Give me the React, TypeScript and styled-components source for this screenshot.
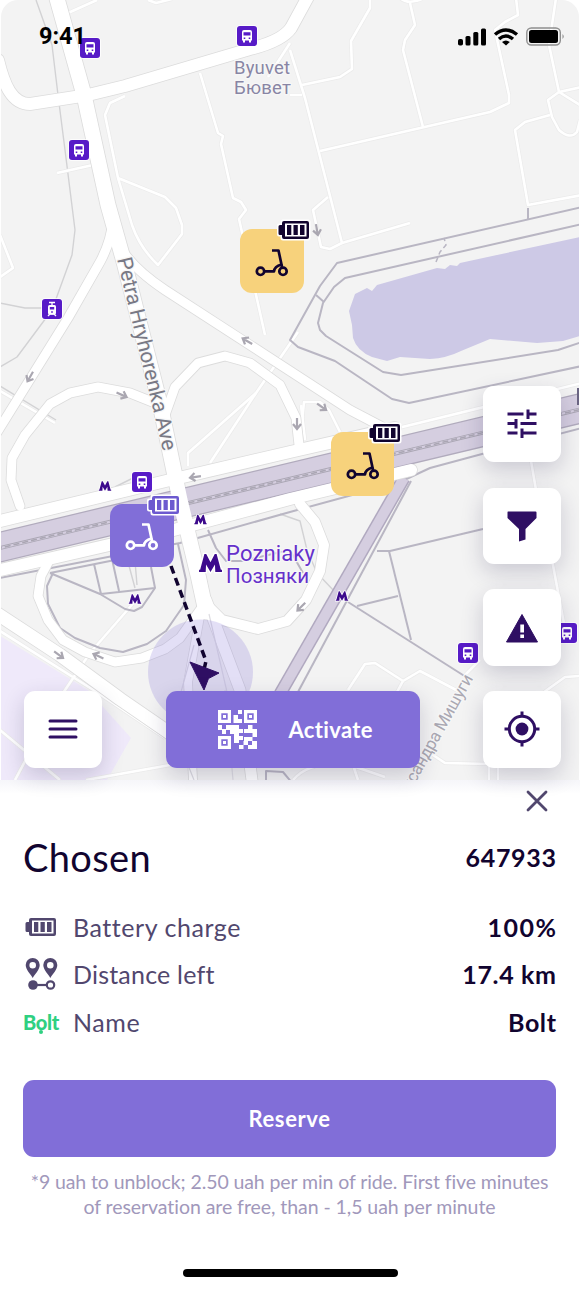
import React from 'react';
import styled, { createGlobalStyle } from 'styled-components';

const GlobalStyle = createGlobalStyle`
  * { box-sizing: border-box; }
  body { margin: 0; background: #fff; }
  button { font: inherit; border: 0; padding: 0; }
`;

const ink = '#2f0f63';
const violet = '#816ed8';
const slate = '#51476e';
const night = '#11042f';

const Screen = styled.main`
  width: 580px;
  height: 1291px;
  display: flex;
  flex-direction: column;
  background: #fff;
  overflow: hidden;
  font-family: Lato, 'Open Sans', sans-serif;
`;

const MapArea = styled.section`
  position: relative;
  flex: 0 0 780px;
  margin: 0 1px;
  display: flex;
  flex-direction: column;
  justify-content: space-between;
`;

const MapCanvas = styled.svg`
  position: absolute;
  inset: 0;
  width: 578px;
  height: 780px;
  border-radius: 17px 17px 0 0;
`;

const StatusBar = styled.header`
  position: relative;
  display: flex;
  justify-content: space-between;
  align-items: flex-start;
  padding: 23px 14px 0 38px;
`;

const Clock = styled.span`
  font: 700 23.5px/27px Roboto, sans-serif;
  color: #000;
`;

const StatusIcons = styled.svg`
  display: block;
  width: 108px;
  height: 20px;
  margin-top: 4px;
`;

const Controls = styled.div`
  position: relative;
  display: flex;
  align-items: flex-end;
  padding: 0 18px 12.5px 23px;
`;

const Fab = styled.button`
  display: flex;
  align-items: center;
  justify-content: center;
  width: 78px;
  height: 76.5px;
  border-radius: 11px;
  background: #fff;
  box-shadow: 0 8px 22px rgba(40, 35, 80, 0.2);
`;

const FabColumn = styled.div`
  display: flex;
  flex-direction: column;
  gap: 25.2px;
  margin-left: auto;
`;

const ActivateButton = styled.button`
  display: flex;
  align-items: center;
  gap: 32px;
  width: 254px;
  height: 76.5px;
  margin-left: 63.5px;
  padding-left: 52px;
  border-radius: 11px;
  background: ${violet};
  color: #fff;
  font-size: 22px;
  font-weight: 700;
  letter-spacing: 0.35px;
  box-shadow: 0 8px 22px rgba(40, 35, 80, 0.2);
`;

const Pin = styled.div<{ $x: number; $y: number; $active?: boolean }>`
  position: absolute;
  left: ${p => p.$x}px;
  top: ${p => p.$y}px;
  width: 63.5px;
  height: 63.5px;
  border-radius: 12px;
  background: ${p => (p.$active ? violet : '#f7d27c')};
  color: ${p => (p.$active ? '#fff' : night)};
`;

const PinScooter = styled.svg`
  position: absolute;
  left: 15px;
  top: 17.5px;
  width: 34px;
  height: 30px;
`;

const PinBattery = styled.svg`
  position: absolute;
  left: 36px;
  top: -10px;
  width: 36px;
  height: 24px;
`;

const Sheet = styled.section`
  flex: 1;
  display: flex;
  flex-direction: column;
  padding: 0 24px 0 23px;
  background: linear-gradient(#f6f6fa, #fff 14px);
`;

const CloseButton = styled.button`
  align-self: flex-end;
  width: 22px;
  height: 22px;
  margin: 10px 8px 0 0;
  background: none;
  svg { display: block; }
`;

const TitleRow = styled.div`
  display: flex;
  justify-content: space-between;
  align-items: center;
  height: 50px;
  margin-top: 20px;
`;

const Title = styled.h1`
  margin: 0;
  font-size: 38px;
  font-weight: 400;
  letter-spacing: 0.35px;
  color: ${night};
`;

const Value = styled.span<{ $spacing?: number }>`
  font-size: 25px;
  font-weight: 700;
  color: ${night};
  white-space: nowrap;
  letter-spacing: ${p => p.$spacing ?? 0}px;
  margin-right: ${p => -(p.$spacing ?? 0)}px;
`;

const Details = styled.dl`
  margin: 21px 0 0;
`;

const DetailRow = styled.div`
  display: flex;
  align-items: center;
  height: 47.5px;
  font-size: 25px;
  dt { flex: 1; color: ${slate}; }
  dd { margin: 0; }
`;

const DetailIcon = styled.span`
  width: 50px;
  height: 40px;
  display: flex;
  align-items: center;
  svg { display: block; }
`;

const Term = styled.span<{ $spacing: number }>`
  letter-spacing: ${p => p.$spacing}px;
`;

const BoltMark = styled.span`
  position: relative;
  color: #2fd081;
  font: 900 20px/24px Lato, sans-serif;
  letter-spacing: -0.3px;
`;

const BoltDot = styled.i`
  position: absolute;
  left: 16px;
  top: 20.5px;
  width: 4px;
  height: 4px;
  border-radius: 50%;
  background: #2fd081;
`;

const ReserveButton = styled.button`
  height: 76.5px;
  margin-top: 34.5px;
  border-radius: 11px;
  background: ${violet};
  color: #fff;
  font-size: 22px;
  font-weight: 700;
  letter-spacing: 0.6px;
`;

const Footnote = styled.p`
  margin: 12px 0 0;
  text-align: center;
  font-size: 19.5px;
  line-height: 25.5px;
  color: #a198bb;
  white-space: nowrap;
`;

const FootLine = styled.span<{ $spacing: number }>`
  display: block;
  letter-spacing: ${p => p.$spacing}px;
`;

const HomeIndicator = styled.div`
  width: 215px;
  height: 8px;
  margin: auto 158px 14px 160px;
  border-radius: 4px;
  background: #000;
`;

type Road = { d: string; w: number };

const mainRoads: Road[] = [
  { d: 'M-2 60C4 85 12 104 30 104L88 95L125 86L250 49Q282 41 291 28L309-5', w: 12 },
  { d: 'M56-5L84 95L108 205L124 262L160 404L180 500L198 575L206 612', w: 15 },
  { d: 'M113 220Q111 242 100 262L68 318L-4 434', w: 9 },
  { d: 'M122 250Q135 270 165 290L290 371L350 410L392 432', w: 9 },
  { d: 'M165 407L130 393L98 387L70 393L50 404L25 435L12 458L11 480L20 506', w: 9 },
  { d: 'M165 415L175 387L198 363L225 356L250 363L280 385L296 418L299 445', w: 9 },
  { d: 'M-4 522L170 480L290 452L395 428', w: 12 },
  { d: 'M-4 571L170 531L290 499L411 470', w: 12 },
  { d: 'M49 561L41 576L38 596L48 620L63 640L85 652L115 662L142 658L165 649L180 638L200 610', w: 9 },
  { d: 'M202 600L222 620L258 629L287 621L306 600L320 571L324 545L315 522L300 504', w: 10 },
  { d: 'M-4 613L60 655L120 699L200 754', w: 13 },
  { d: 'M203 600L188 682L193 780', w: 8 },
  { d: 'M206 600L240 690L252 780', w: 11 },
];

const lanes = [
  'M68 13L97 0', 'M148 0L156 3L172-1',
  'M200 73L218 133L223 136L221 144L233 198L241 202L246 210L239 219L265 335',
  'M125 96L110 103L105 115L118 178L132 225Q140 248 158 265L182 234V225L176 208L165 197L118 178',
  'M57 173L93 165',
  'M290 50L305 98L342 243L330 249L321 247L313 210L328 197', 'M342 243L410 223',
  'M302 85L340 77L352 69L351 41L370 8V-2', 'M290 95H302',
  'M320 151L490 112L509 103V95L495 30L505 22L518 15L516-2',
  'M423 127L403 50L405 40L415 25L410 3M400-2Q408 5 422-1',
  'M556-2L549 45L559 92L548 100L552 117L559 130Q570 140 577 132L580 120',
  'M559 92L582 87M559 92L580 105',
  'M550 115L525 122L515 130L528 205L582 195',
  'M290 43L268 77',
  'M0 235L13 268L0 277', 'M0 391L55 423', 'M188 466V453L256 393L298 332', 'M256 393L210 463',
  'M300 440L304 402L320 402L329 410L340 432', 'M305 440L301 405',
  'M0 631L95 691L165 738', 'M0 730L30 755L60 780', 'M15 780L55 705L90 653L137 599',
  'M86 780L170 765', 'M530 455L536 490M552 560L567 640', 'M348 690L365 664L375 663L403 681L420 671L460 692',
  'M403 681L397 692', 'M580 676L565 677L540 695M480 660L465 675', 'M430 753L445 763L490 764M489 765V780M498 765V780',
  'M293 780Q310 760 350 765L385 777M353 765L358 780',
  'M390 430L582 383',
];

const paths = [
  'M582 207L337 263L320 286L290 340L298 347L335 361L392 399L409 403L582 366',
  'M582 224L345 278L334 287L323 303L318 323L320 330L326 336L383 372L401 375L558 350L582 342',
  'M316 295L324 302', 'M528 208V219',
  'M0 578L180 543L290 512L400 482L430 468L482 454L582 428',
  'M411 481L298 692', 'M377 551H390L483 529', 'M389 551L411 640', 'M357 606L398 596', 'M348 602L466 677',
  'M50 573L95 564L125 558M50 573L100 594L125 609L134 611L142 607L155 588L151 567M94 564L101 594L155 588M112 559L119 591',
  'M53 573L47 586L48 604L60 628L75 638L100 648L123 652L147 644L166 631L184 605L186 580L178 544',
  'M208 530L216 548L226 561H242L290 550L303 573',
  'M266 780V771L283 772L293 784',
];

const lowContrast = [
  'M36 0L52 45L58 95L65 150L75 230L72 255L52 310L17 357L0 367',
  'M0 303L25 308H45', 'M0 386L56 420', 'M115 487L135 477',
  'M128 562L135 588M135 561L137 585', 'M280 514L300 521L307 550L317 573L335 592',
];

const arrows: [number, number, number][] = [
  [247, 341, 210], [30, 377, 120], [122, 395, 24], [195, 477, 172], [297, 424, 90],
  [322, 407, 35], [301, 607, 135], [59, 655, 36], [98, 656, 205], [317, 230, 80],
];

const stops: [number, number][] = [[90, 48], [247, 36], [79, 150], [142, 482], [468, 653], [567, 633]];
const metros: [number, number, number][] = [[105, 486, 1], [200.5, 519.5, 1], [135, 599, 1], [342, 596, 1], [210.5, 563, 1.85]];

function BusStop({ x, y }: { x: number; y: number }) {
  return (
    <g transform={`translate(${x - 10} ${y - 10})`}>
      <rect x="-.8" y="-.8" width="21.6" height="21.6" rx="3.5" fill="#fff" />
      <rect width="20" height="20" rx="3" fill="#571bc7" />
      <path fill="#fff" d="M5 6q0-2 2-2h6q2 0 2 2v8.500h-1v2h-2v-2H8v2H6v-2H5z" />
      <path fill="#571bc7" d="M6.500 6.200h7v3.400h-7zM6.700 11.500h1.600v1.500H6.700zM11.700 11.500h1.600v1.500h-1.600z" />
    </g>
  );
}

function TramStop() {
  return (
    <g transform="translate(42 299)">
      <rect x="-.8" y="-.8" width="21.6" height="21.6" rx="3.5" fill="#fff" />
      <rect width="20" height="20" rx="3" fill="#571bc7" />
      <path d="M7 3.500h6M10 4v3M6 17l2-2h4l2 2" stroke="#fff" strokeWidth="1.3" fill="none" />
      <rect x="6" y="6" width="8" height="9.500" rx="1.500" fill="#fff" />
      <path fill="#571bc7" d="M7.800 8h4.400v2.600H7.800zM9.200 12.200h1.600v1.500H9.200z" />
    </g>
  );
}

function CityMap() {
  return (
    <MapCanvas viewBox="1 0 578 780">
      <rect width="580" height="780" fill="#f3f3f3" />
      <path d="M0 636L88 690L131 738L107 780H0z" fill="#efe9fa" />
      <path fill="#cdc9e6" d="M580 237L460 263L457 266L450 265L445 269L437 268L377 285L372 291L367 288L355 294L349 311L352 325L353 338Q357 351 372 357L387 361L400 357L430 359Q447 358 461 351L490 339L537 343L563 341L580 336z" />
      <g fill="none" strokeLinejoin="round">
        {lowContrast.map((d, i) => <path key={i} d={d} stroke="#d2d2d4" strokeWidth="1.4" />)}
        {lanes.map((d, i) => <path key={i} d={d} stroke="#ebebeb" strokeWidth="4" />)}
        {lanes.map((d, i) => <path key={i} d={d} stroke="#fff" strokeWidth="2.6" />)}
        {paths.map((d, i) => <path key={i} d={d} stroke="#b9b6c3" strokeWidth="2" />)}
        <path d="M404 478L280 694" stroke="#b1a9c0" strokeWidth="13" />
        <path d="M404 478L280 694" stroke="#d5cee0" strokeWidth="10" />
        {mainRoads.map((r, i) => <path key={i} d={r.d} stroke="#dcdcdc" strokeWidth={r.w + 1.6} strokeLinecap="round" />)}
        <path d="M-4 548L582 408" stroke="#b1abbd" strokeWidth="30.500" />
        <path d="M-4 548L582 408" stroke="#d5cee0" strokeWidth="28" />
        <path d="M-4 549L582 409" stroke="#aaa6b3" strokeWidth="4" />
        <path d="M-4 549L582 409" stroke="#d5cee0" strokeWidth="2.200" />
        <path d="M-4 549L582 409" stroke="#aaa6b3" strokeWidth="1.600" strokeDasharray="6 3" />
        {mainRoads.map((r, i) => <path key={i} d={r.d} stroke="#fff" strokeWidth={r.w} strokeLinecap="round" />)}
        <path d="M209 614L227 692M194 645L181 692M233 780L225 690M194 780L188 765" stroke="#dedde2" strokeWidth="1.2" />
        <path d="M436 262L440 252L446 245L444 238" stroke="#b9b6c3" strokeWidth="1.500" strokeDasharray="5 3" />
      </g>
      {arrows.map(([x, y, r], i) => (
        <path key={i} transform={`translate(${x} ${y}) rotate(${r})`} d="M-6 0H4M0-4L5 0L0 4" fill="none" stroke="#aaa7b1" strokeWidth="2.200" />
      ))}
      <path d="M577 388h4v17h-4z" fill="#6b6583" />
      <circle cx="200.500" cy="672" r="52.500" fill={violet} fillOpacity=".22" />
      <path d="M171 566L206 661L203 674" fill="none" stroke={night} strokeWidth="3.500" strokeDasharray="8 4.800" />
      <path d="M190 662L219 673L208.500 678.500L204 690z" fill={ink} stroke={ink} strokeLinejoin="round" />
      {stops.map(([x, y]) => <BusStop key={`${x}-${y}`} x={x} y={y} />)}
      <TramStop />
      {metros.map(([x, y, s]) => (
        <path key={`${x}-${y}`} transform={`translate(${x} ${y}) scale(${s})`} d="M-6.200 4.800H-2.600L-2.400 .8L0 4.800L2.400 .8L2.600 4.800H6.200V3.700H5.600L3.300-4.800H2.300L0-.4L-2.300-4.800H-3.300L-5.600 3.700H-6.200z" fill="#3c0a8c" stroke="#fff" strokeWidth="1.500" paintOrder="stroke" />
      ))}
      <g fontFamily="Roboto, sans-serif" stroke="#f7f7f7" strokeWidth="2.500" paintOrder="stroke" strokeLinejoin="round">
        <text x="234" y="74" fontSize="18.500" fill="#8885a4" textLength="56">Byuvet</text>
        <text x="234" y="94" fontSize="18.500" fill="#8885a4" textLength="57">Бювет</text>
        <text x="226" y="561" fontSize="22" fill="#6530cb" textLength="89">Pozniaky</text>
        <text x="226" y="582.500" fontSize="20.500" fill="#6530cb" textLength="83">Позняки</text>
        <text transform="translate(117 259) rotate(76.500)" fontSize="21" fill="#797985" textLength="198">Petra Hryhorenka Ave</text>
        <text transform="translate(411 791) rotate(-61)" fontSize="17" fill="#aaa8b2" textLength="129">ксандра Мишуги</text>
      </g>
    </MapCanvas>
  );
}

function BatteryShape() {
  return (
    <>
      <path fill="currentColor" d="M4 6H6V4q0-2 2-2H31q2 0 2 2V18q0 2-2 2H8q-2 0-2-2V16H4q-1.500 0-1.500-1.500V7.500Q2.500 6 4 6z" />
      <rect x="9" y="4.500" width="21.500" height="13" fill="#fff" />
      <path fill="currentColor" d="M11 6h4.300v10H11zM17.500 6h4.300v10h-4.300zM24 6h4.500v10H24z" />
    </>
  );
}

function ScooterPin({ x, y, active }: { x: number; y: number; active?: boolean }) {
  return (
    <Pin $x={x} $y={y} $active={active}>
      <PinScooter viewBox="0 0 34 30" fill="none" stroke="currentColor" strokeWidth="2.700">
        <circle cx="5.500" cy="24.300" r="3.700" />
        <circle cx="28" cy="24.300" r="3.700" />
        <path d="M9.500 24.300H19Q19.500 19.500 26.500 17.500L23.500 3.500H17" strokeLinejoin="round" />
        <path d="M26.500 17.500L27 20" />
      </PinScooter>
      <PinBattery viewBox="0 0 36 24">
        <path fill="#fff" d="M3 4.500H4.500V3q0-2.500 2.500-2.500H32q2.500 0 2.500 2.500V19q0 2.500-2.500 2.500H7Q4.500 21.500 4.500 19V17.500H3Q1 17.500 1 15.500V6.500Q1 4.500 3 4.500z" />
        <g color={active ? '#6c59cf' : night}><BatteryShape /></g>
      </PinBattery>
    </Pin>
  );
}

function QrIcon() {
  const finders = [[0, 0], [26, 0], [0, 26]];
  return (
    <svg width="39" height="39" viewBox="0 0 39 39">
      {finders.map(([x, y]) => (
        <g key={`${x}-${y}`} transform={`translate(${x} ${y})`} fill="#fff">
          <path fillRule="evenodd" d="M0 0H13V13H0zM3.300 3.300V9.700H9.700V3.300z" />
          <rect x="5" y="5" width="3" height="3" />
        </g>
      ))}
      <path fill="#fff" d="M20 0h4v4h-4zM15.500 5h4.500v4h4v4h-8.500zM0 15h4v4h4v-4h13v4h4v4H21v3h4v4h-4v3h-5v-9h-4v-4H8v4H4v-4H0zM30 15h4.500v4H39v8h-4.500v-4H26v-4h4zM26 27h8.500v4H39v8h-9v-4h4v-4h-8zM21 35h4.500v4H21zM25.500 31H30v4h-4.500z" />
    </svg>
  );
}

function TuneIcon() {
  return (
    <svg width="32" height="32" viewBox="0 0 32 32" stroke={ink} strokeWidth="3" fill="none">
      <path d="M1.500 6H17.500M22 6H30.500M22 1.500V11M1.500 15.500H10M10 11V20.500M14.500 15.500H30.500M1.500 25H11.500M16 25H30.500M16 20.500V30" />
    </svg>
  );
}

function FunnelIcon() {
  return (
    <svg width="32" height="32" viewBox="0 0 32 32" fill={ink}>
      <path d="M2 1.500H29.500Q30.500 1.500 30.500 2.500V8L19.500 19V29.500L13 31.500V19L1.500 8V2.500Q1.500 1.500 2 1.500z" />
    </svg>
  );
}

function WarningIcon() {
  return (
    <svg width="34" height="32" viewBox="0 0 34 32">
      <path d="M17 2.500L32.500 30H1.500z" fill={ink} stroke={ink} strokeLinejoin="round" />
      <path d="M15.300 12.500h3.700v8h-3.700zM15.300 22.500h3.700v3.500h-3.700z" fill="#fff" />
    </svg>
  );
}

function LocateIcon() {
  return (
    <svg width="36" height="36" viewBox="0 0 36 36" stroke={ink} strokeWidth="3" fill="none">
      <circle cx="18" cy="18" r="12.700" />
      <circle cx="18" cy="18" r="6.400" fill={ink} stroke="none" />
      <path d="M18 .5V6M18 30v5.500M.5 18H6M30 18h5.500" />
    </svg>
  );
}

function RouteIcon() {
  const marker = 'M7 0a7 7 0 0 1 7 7c0 5-5 9-7 13C5 16 0 12 0 7a7 7 0 0 1 7-7zm0 4a3.300 3.300 0 1 0 0 6.600a3.300 3.300 0 0 0 0-6.600z';
  return (
    <svg width="36" height="36" viewBox="0 0 36 36" fill={slate}>
      <path transform="translate(2.700 2)" d={marker} />
      <path transform="translate(20.300 2)" d={marker} />
      <circle cx="10" cy="29" r="4.800" />
      <path d="M10 29H23" stroke={slate} strokeWidth="2.200" />
      <circle cx="27.500" cy="29" r="3.700" fill="none" stroke={slate} strokeWidth="2.200" />
    </svg>
  );
}

export default function App() {
  return (
    <Screen>
      <GlobalStyle />
      <MapArea>
        <CityMap />
        <ScooterPin x={239} y={229} />
        <ScooterPin x={329.5} y={432} />
        <ScooterPin x={109} y={503.5} active />
        <StatusBar>
          <Clock>9:41</Clock>
          <StatusIcons viewBox="457 27 108 20">
            <rect x="458" y="39" width="5" height="6.500" rx="1.800" />
            <rect x="465.500" y="36" width="5" height="9.500" rx="1.500" />
            <rect x="473.300" y="32" width="5" height="13.500" rx="1.500" />
            <rect x="481" y="28.500" width="5" height="17" rx="1.500" />
            <g fill="none" stroke="#000" strokeWidth="3.500">
              <path d="M495 34.500Q505.800 25.500 517 34.500" />
              <path d="M499 39Q505.800 33 513 39" />
            </g>
            <path d="M502 42Q505.800 39 509.800 42L506 45.500z" />
            <rect x="526.800" y="28" width="33.500" height="17" rx="4.500" fill="none" stroke="#8f8f8f" strokeWidth="1.400" />
            <rect x="529" y="30" width="29" height="13" rx="2.500" />
            <path d="M562.500 34Q565 36.500 562.500 39z" fill="#8f8f8f" />
          </StatusIcons>
        </StatusBar>
        <Controls>
          <Fab aria-label="Menu">
            <svg width="30" height="22" viewBox="0 0 30 22" stroke={ink} strokeWidth="3" strokeLinecap="round">
              <path d="M2 3H28M2 11H28M2 19H28" />
            </svg>
          </Fab>
          <ActivateButton><QrIcon />Activate</ActivateButton>
          <FabColumn>
            <Fab aria-label="Settings"><TuneIcon /></Fab>
            <Fab aria-label="Filter"><FunnelIcon /></Fab>
            <Fab aria-label="Report"><WarningIcon /></Fab>
            <Fab aria-label="Locate"><LocateIcon /></Fab>
          </FabColumn>
        </Controls>
      </MapArea>
      <Sheet>
        <CloseButton aria-label="Close">
          <svg width="22" height="22" viewBox="0 0 22 22" stroke={slate} strokeWidth="2.800" strokeLinecap="round">
            <path d="M2 2L20 20M20 2L2 20" />
          </svg>
        </CloseButton>
        <TitleRow>
          <Title>Chosen</Title>
          <Value $spacing={0.7}>647933</Value>
        </TitleRow>
        <Details>
          <DetailRow>
            <DetailIcon><svg width="36" height="24" viewBox="0 -1 36 24" color={slate}><BatteryShape /></svg></DetailIcon>
            <dt><Term $spacing={0.55}>Battery charge</Term></dt>
            <dd><Value $spacing={1.5}>100%</Value></dd>
          </DetailRow>
          <DetailRow>
            <DetailIcon><RouteIcon /></DetailIcon>
            <dt><Term $spacing={0.2}>Distance left</Term></dt>
            <dd><Value $spacing={0.65}>17.4 km</Value></dd>
          </DetailRow>
          <DetailRow>
            <DetailIcon><BoltMark>Bolt<BoltDot /></BoltMark></DetailIcon>
            <dt><Term $spacing={0.6}>Name</Term></dt>
            <dd><Value $spacing={0.6}>Bolt</Value></dd>
          </DetailRow>
        </Details>
        <ReserveButton>Reserve</ReserveButton>
        <Footnote>
          <FootLine $spacing={-0.1}>*9 uah to unblock; 2.50 uah per min of ride. First five minutes</FootLine>
          <FootLine $spacing={-0.06}>of reservation are free, than - 1,5 uah per minute</FootLine>
        </Footnote>
        <HomeIndicator />
      </Sheet>
    </Screen>
  );
}
